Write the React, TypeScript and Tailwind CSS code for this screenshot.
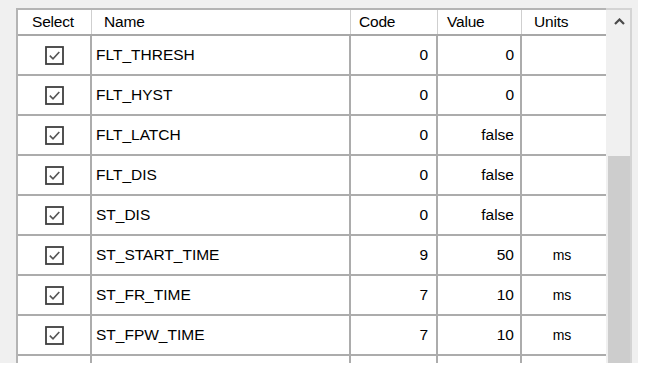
import React from "react";

const rows = [
  { name: "FLT_THRESH", code: "0", value: "0", units: "" },
  { name: "FLT_HYST", code: "0", value: "0", units: "" },
  { name: "FLT_LATCH", code: "0", value: "false", units: "" },
  { name: "FLT_DIS", code: "0", value: "false", units: "" },
  { name: "ST_DIS", code: "0", value: "false", units: "" },
  { name: "ST_START_TIME", code: "9", value: "50", units: "ms" },
  { name: "ST_FR_TIME", code: "7", value: "10", units: "ms" },
  { name: "ST_FPW_TIME", code: "7", value: "10", units: "ms" },
];

const cols = "grid grid-cols-[74px_259px_87px_84px_86px]";

function Check() {
  return (
    <svg width="19" height="19" viewBox="0 0 19 19">
      <rect x="1" y="1" width="17" height="17" fill="#fff" stroke="#3f3f3f" strokeWidth="1.8" />
      <path d="M4.8 9.6 L8 12.8 L14.3 6" fill="none" stroke="#555" strokeWidth="1.6" />
    </svg>
  );
}

export default function App() {
  return (
    <div className="w-[650px] h-[374px] bg-white overflow-hidden" style={{ fontFamily: '"Liberation Sans", Arial, sans-serif' }}>
      <div className="w-[638px] h-[363px] bg-[#f0f0f0] pl-[16px] pt-[8px] flex">
        <div className="w-[590px] h-[355px] bg-white border-l-2 border-t-2 border-[#b4b4b4] overflow-hidden">
          <div className={`${cols} h-[26px] border-b-2 border-[#a8a8a8] text-[15.5px] tracking-[-0.2px] text-black`}>
            <div className="border-r border-[#cfcfcf] pl-[14px] flex items-center">Select</div>
            <div className="border-r border-[#cfcfcf] pl-[12px] flex items-center">Name</div>
            <div className="border-r border-[#cfcfcf] pl-[8px] flex items-center">Code</div>
            <div className="border-r border-[#cfcfcf] pl-[9px] flex items-center">Value</div>
            <div className="pl-[12px] flex items-center">Units</div>
          </div>
          {rows.map((r) => (
            <div key={r.name} className={`${cols} h-[40px] text-[15.5px] text-black`}>
              <div className="border-r-2 border-b-2 border-[#acacac] flex items-center justify-center pt-[1px]">
                <Check />
              </div>
              <div className="border-r-2 border-b-2 border-[#acacac] pl-[4px] flex items-center">{r.name}</div>
              <div className="border-r-2 border-b-2 border-[#acacac] pr-[8px] flex items-center justify-end">{r.code}</div>
              <div className="border-r-2 border-b-2 border-[#acacac] pr-[6px] flex items-center justify-end">{r.value}</div>
              <div className="border-r-2 border-b-2 border-[#acacac] flex items-center justify-center text-[14px] pr-[4px]">{r.units}</div>
            </div>
          ))}
          <div className={`${cols} h-[20px]`}>
            <div className="border-r-2 border-[#acacac]" />
            <div className="border-r-2 border-[#acacac]" />
            <div className="border-r-2 border-[#acacac]" />
            <div className="border-r-2 border-[#acacac]" />
            <div className="border-r-2 border-[#acacac]" />
          </div>
        </div>
        <div className="w-[26px] h-[355px] bg-[#f0f0f0] border-t-2 border-r-2 border-[#d4d4d4] flex flex-col">
          <div className="h-[146px] flex justify-center pt-[8px] pl-[2px]">
            <svg width="11" height="7" viewBox="0 0 11 7">
              <path d="M1 6 L5.5 1.5 L10 6" fill="none" stroke="#4a4a4a" strokeWidth="2.2" />
            </svg>
          </div>
          <div className="flex-1 ml-[2px] bg-[#cdcdcd]" />
        </div>
      </div>
    </div>
  );
}
